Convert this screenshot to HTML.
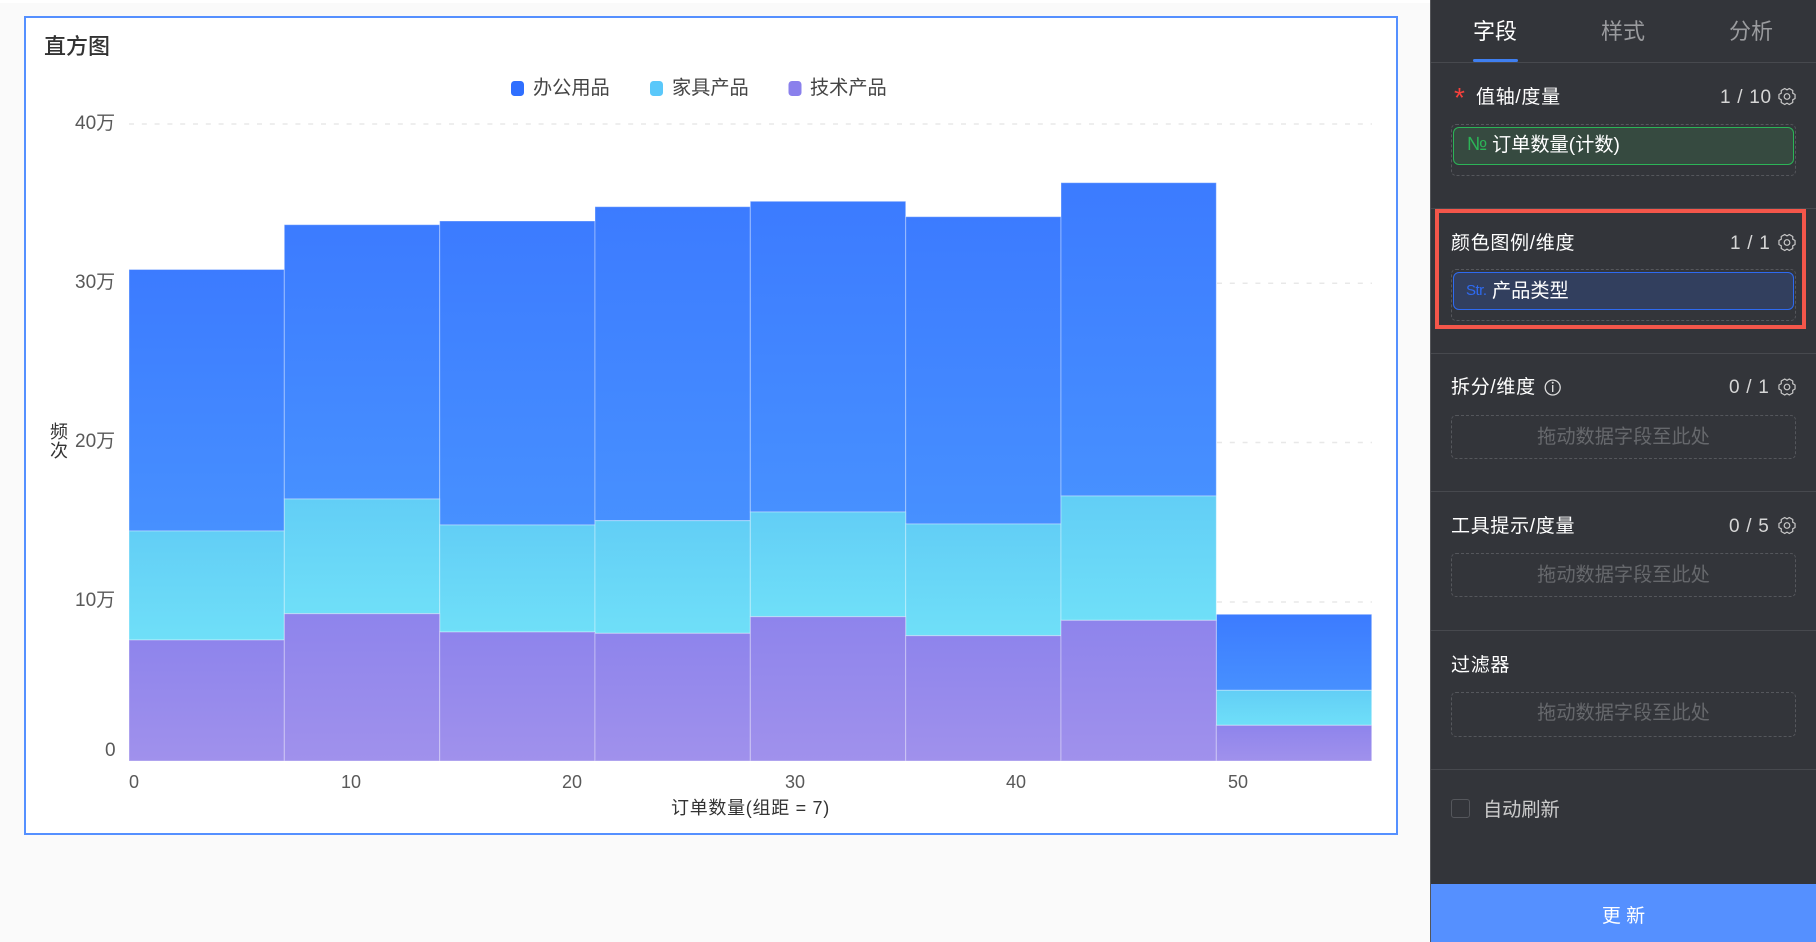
<!DOCTYPE html>
<html lang="zh">
<head>
<meta charset="utf-8">
<title>直方图</title>
<style>
html,body{margin:0;padding:0;width:1816px;height:942px;overflow:hidden;background:#fafafa;font-family:"Liberation Sans","Noto Sans CJK SC",sans-serif;}
.t{position:absolute;white-space:nowrap;line-height:30px;height:30px;}
.card{position:absolute;left:24px;top:16px;width:1370px;height:815px;border:2px solid #5590ff;background:#fff;}
.side{position:absolute;left:1430px;top:0;width:386px;height:942px;background:#33353a;border-left:1px solid #55565a;box-sizing:border-box;}
.div{position:absolute;left:1431px;width:385px;height:1px;background:#47494e;}
.dash{position:absolute;left:1451px;width:345px;box-sizing:border-box;border:1px dashed #55575c;border-radius:5px;}
.pill{position:absolute;left:1453px;width:341px;height:38px;box-sizing:border-box;border-radius:6px;border:1.5px solid;}
.h{font-size:19px;letter-spacing:.7px;color:#fff;}
.n{font-size:19px;letter-spacing:.7px;color:#d6d6d6;}
.ph{left:1451px;width:345px;text-align:center;font-size:19.2px;color:#66686c;}
.red{position:absolute;left:1435px;top:209px;width:371px;height:120px;box-sizing:border-box;border:4.5px solid #f4564a;}
.ax{font-size:18px;color:#595959;}
.ay{font-size:19px;color:#595959;}
</style>
</head>
<body>
<div style="position:absolute;left:0;top:0;width:1430px;height:3px;background:#fff"></div>
<div class="card"></div>

<svg style="position:absolute;left:0;top:0" width="1430" height="942" viewBox="0 0 1430 942">
<defs>
<linearGradient id="b" x1="0" y1="0" x2="0" y2="1"><stop offset="0" stop-color="#3c7bff"/><stop offset="1" stop-color="#4790ff"/></linearGradient>
<linearGradient id="c" x1="0" y1="0" x2="0" y2="1"><stop offset="0" stop-color="#62cef6"/><stop offset="1" stop-color="#6fdff8"/></linearGradient>
<linearGradient id="p" x1="0" y1="0" x2="0" y2="1"><stop offset="0" stop-color="#8e84ec"/><stop offset="1" stop-color="#a091ec"/></linearGradient>
</defs>
<g stroke="#e8e8e8" stroke-width="1.5" stroke-dasharray="5 7.8">
<line x1="129" y1="124" x2="1372" y2="124"/>
<line x1="129" y1="283.25" x2="1372" y2="283.25"/>
<line x1="129" y1="442.5" x2="1372" y2="442.5"/>
<line x1="129" y1="602" x2="1372" y2="602"/>
</g>
<g stroke="#fff" stroke-opacity=".35" stroke-width="1">
<rect x="129" y="269.5" width="155.3" height="261.5" fill="url(#b)"/>
<rect x="284.3" y="224.7" width="155.4" height="274.3" fill="url(#b)"/>
<rect x="439.7" y="221" width="155.3" height="304" fill="url(#b)"/>
<rect x="595" y="206.7" width="155.3" height="314" fill="url(#b)"/>
<rect x="750.3" y="201.3" width="155.4" height="310.7" fill="url(#b)"/>
<rect x="905.7" y="216.7" width="155.3" height="307.3" fill="url(#b)"/>
<rect x="1061" y="182.7" width="155.3" height="313.3" fill="url(#b)"/>
<rect x="1216.3" y="614.3" width="155.4" height="76" fill="url(#b)"/>
<rect x="129" y="531" width="155.3" height="109" fill="url(#c)"/>
<rect x="284.3" y="499" width="155.4" height="114.7" fill="url(#c)"/>
<rect x="439.7" y="525" width="155.3" height="107" fill="url(#c)"/>
<rect x="595" y="520.7" width="155.3" height="112.6" fill="url(#c)"/>
<rect x="750.3" y="512" width="155.4" height="104.7" fill="url(#c)"/>
<rect x="905.7" y="524" width="155.3" height="111.7" fill="url(#c)"/>
<rect x="1061" y="496" width="155.3" height="124.3" fill="url(#c)"/>
<rect x="1216.3" y="690.3" width="155.4" height="35" fill="url(#c)"/>
<rect x="129" y="640" width="155.3" height="121" fill="url(#p)"/>
<rect x="284.3" y="613.7" width="155.4" height="147.3" fill="url(#p)"/>
<rect x="439.7" y="632" width="155.3" height="129" fill="url(#p)"/>
<rect x="595" y="633.3" width="155.3" height="127.7" fill="url(#p)"/>
<rect x="750.3" y="616.7" width="155.4" height="144.3" fill="url(#p)"/>
<rect x="905.7" y="635.7" width="155.3" height="125.3" fill="url(#p)"/>
<rect x="1061" y="620.3" width="155.3" height="140.7" fill="url(#p)"/>
<rect x="1216.3" y="725.3" width="155.4" height="35.7" fill="url(#p)"/>
</g>
<rect x="511" y="81" width="13" height="15" rx="3.5" fill="#2f6fff"/>
<rect x="650" y="81" width="13" height="15" rx="3.5" fill="#5ac8fa"/>
<rect x="788.5" y="81" width="13" height="15" rx="3.5" fill="#8a80ec"/>
</svg>

<div class="t" style="left:44px;top:32px;font-size:22px;font-weight:500;color:#333">直方图</div>
<div class="t" style="left:533px;top:74px;font-size:19.2px;color:#444">办公用品</div>
<div class="t" style="left:672px;top:74px;font-size:19.2px;color:#444">家具产品</div>
<div class="t" style="left:810px;top:74px;font-size:19.2px;color:#444">技术产品</div>

<div class="t ay" style="left:75px;top:109px">40万</div>
<div class="t ay" style="left:75px;top:268px">30万</div>
<div class="t ay" style="left:75px;top:427px">20万</div>
<div class="t ay" style="left:75px;top:586px">10万</div>
<div class="t ay" style="left:105px;top:736px">0</div>
<div class="t ax" style="left:129px;top:767px">0</div>
<div class="t ax" style="left:341px;top:767px">10</div>
<div class="t ax" style="left:562px;top:767px">20</div>
<div class="t ax" style="left:785px;top:767px">30</div>
<div class="t ax" style="left:1006px;top:767px">40</div>
<div class="t ax" style="left:1228px;top:767px">50</div>
<div class="t" style="left:671px;top:793px;font-size:18px;letter-spacing:.7px;color:#333">订单数量(组距 = 7)</div>
<div style="position:absolute;left:50px;top:423px;width:18px;font-size:18px;line-height:18.5px;color:#333">频<br>次</div>

<div class="side"></div>
<div class="div" style="top:62px"></div>
<div class="div" style="top:208px"></div>
<div class="div" style="top:353px"></div>
<div class="div" style="top:491px"></div>
<div class="div" style="top:630px"></div>
<div class="div" style="top:769px"></div>
<div style="position:absolute;left:1473px;top:59px;width:45px;height:3px;border-radius:2px;background:#3f7ff0"></div>

<div class="t" style="left:1473px;top:17px;font-size:22px;color:#fff">字段</div>
<div class="t" style="left:1601px;top:17px;font-size:22px;color:#9a9b9e">样式</div>
<div class="t" style="left:1729px;top:17px;font-size:22px;color:#9a9b9e">分析</div>

<div class="t" style="left:1454px;top:83px;font-size:28px;color:#f5413c">*</div>
<div class="t h" style="left:1476px;top:83px">值轴/度量</div>
<div class="t n" style="left:1720px;top:83px">1 / 10</div>
<div class="dash" style="top:124px;height:52px"></div>
<div class="pill" style="top:127px;background:#364a40;border-color:#2cb457"></div>
<div class="t" style="left:1467px;top:130px;font-size:19px;color:#2cb457">№</div>
<div class="t" style="left:1492px;top:131px;font-size:19.2px;color:#fff">订单数量(计数)</div>

<div class="red"></div>
<div class="t h" style="left:1451px;top:229px">颜色图例/维度</div>
<div class="t n" style="left:1730px;top:229px">1 / 1</div>
<div class="dash" style="top:269px;height:52px"></div>
<div class="pill" style="top:272px;background:#323f5e;border-color:#2e6af0"></div>
<div class="t" style="left:1466px;top:276px;font-size:15px;letter-spacing:-.5px;color:#2e6af0">Str.</div>
<div class="t" style="left:1492px;top:277px;font-size:19.2px;color:#fff">产品类型</div>

<div class="t h" style="left:1451px;top:373px">拆分/维度</div>
<div class="t n" style="left:1729px;top:373px">0 / 1</div>
<div class="dash" style="top:415px;height:44px"></div>
<div class="t ph" style="top:423px">拖动数据字段至此处</div>

<div class="t h" style="left:1451px;top:512px">工具提示/度量</div>
<div class="t n" style="left:1729px;top:512px">0 / 5</div>
<div class="dash" style="top:553px;height:44px"></div>
<div class="t ph" style="top:561px">拖动数据字段至此处</div>

<div class="t h" style="left:1451px;top:651px">过滤器</div>
<div class="dash" style="top:692px;height:45px"></div>
<div class="t ph" style="top:699px">拖动数据字段至此处</div>

<div style="position:absolute;left:1451px;top:799px;width:19px;height:19px;box-sizing:border-box;border:1.5px solid #55575c;border-radius:3px"></div>
<div class="t" style="left:1483px;top:796px;font-size:19.2px;color:#ccc">自动刷新</div>

<div style="position:absolute;left:1431px;top:884px;width:385px;height:58px;background:#5590ff"></div>
<div class="t" style="left:1431px;width:385px;top:902px;text-align:center;font-size:19px;color:#fff">更 新</div>

<svg style="position:absolute;left:1430px;top:0" width="386" height="942" viewBox="1430 0 386 942">
<defs>
<g id="gear" fill="none" stroke="#c8c8c8" stroke-width="1.2" stroke-linejoin="round">
<polygon points="8.05,2.01 5.72,3.3 5.77,5.97 2.29,7.98 0,6.6 -2.29,7.98 -5.77,5.97 -5.72,3.3 -8.05,2.01 -8.05,-2.01 -5.72,-3.3 -5.77,-5.97 -2.29,-7.98 0,-6.6 2.29,-7.98 5.77,-5.97 5.72,-3.3 8.05,-2.01"/>
<circle r="2.8"/>
</g>
</defs>
<use href="#gear" x="1787" y="96.5"/>
<use href="#gear" x="1787" y="242.5"/>
<use href="#gear" x="1787" y="387"/>
<use href="#gear" x="1787" y="525.5"/>
<circle cx="1552.7" cy="387.5" r="7.5" fill="none" stroke="#ddd" stroke-width="1.3"/>
<line x1="1552.7" y1="385" x2="1552.7" y2="392" stroke="#ddd" stroke-width="1.4"/>
<circle cx="1552.7" cy="382.8" r="1" fill="#ddd"/>
</svg>
</body>
</html>
